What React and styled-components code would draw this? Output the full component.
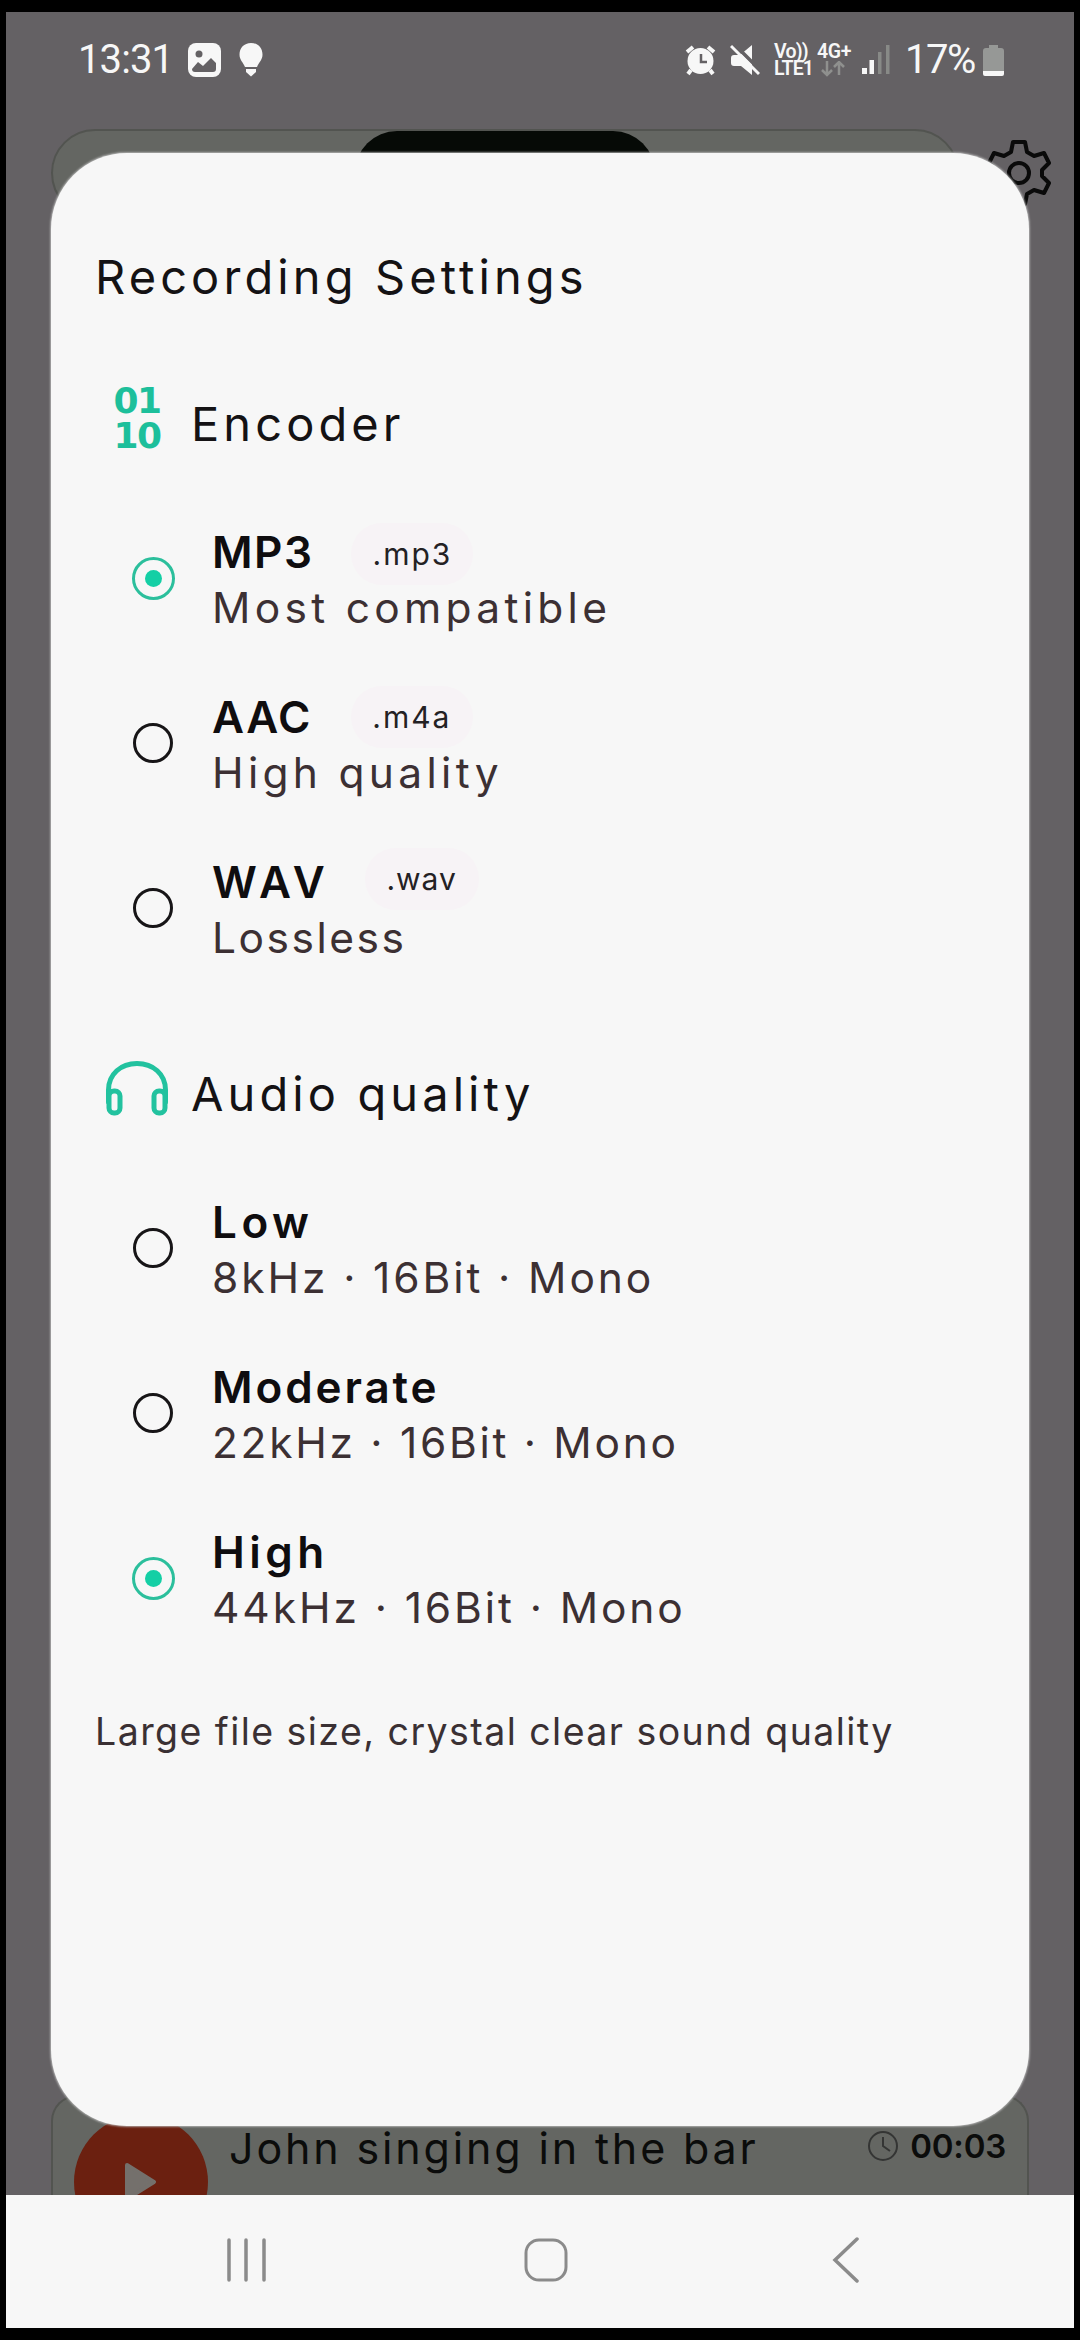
import React from "react";
import styled, { createGlobalStyle } from "styled-components";

const GlobalStyle = createGlobalStyle`
  * {
    box-sizing: border-box;
  }

  body {
    margin: 0;
    background-color: #000;
    font-family: Inter, "Liberation Sans", sans-serif;
  }

  svg {
    display: block;
    flex-shrink: 0;
  }
`;

const Device = styled.div`
  width: 1080px;
  height: 2340px;
  padding: 12px 6px;
  background-color: #000;
`;

const Screen = styled.div`
  position: relative;
  display: flex;
  flex-direction: column;
  width: 1068px;
  height: 2316px;
  overflow: hidden;
  background-color: #646164;
`;

const StatusBar = styled.div`
  display: flex;
  justify-content: space-between;
  height: 117px;
  padding: 24px 70px 0 72px;
  color: #f7f7f7;
  font-family: Roboto, sans-serif;
  font-size: 40px;
  line-height: 48px;

  > .side {
    display: flex;
    align-items: center;
    height: 48px;
  }

  .bulb {
    margin-left: 18px;
  }

  .mute {
    margin-left: 14px;
  }

  .signal {
    margin-left: 11px;
  }
`;

const Clock = styled.span`
  width: 110px;
  letter-spacing: -0.9px;
`;

const Percent = styled.span`
  width: 78px;
  margin-left: 15px;
  letter-spacing: -1.5px;
`;

const Network = styled.div`
  display: flex;
  flex-direction: column;
  width: ${(props) => props.$width}px;
  margin-left: ${(props) => props.$left}px;
  font-size: 19.5px;
  font-weight: 600;
  line-height: 17px;
  letter-spacing: ${(props) => props.$spacing || 0}px;
  white-space: nowrap;

  > svg {
    margin: 1px 0 0 4px;
  }
`;

const TopBar = styled.div`
  display: flex;
  align-items: center;
  height: 88px;
  padding-left: 45px;

  > svg {
    margin-left: 27px;
  }
`;

const Tabs = styled.div`
  display: flex;
  justify-content: center;
  width: 908px;
  height: 88px;
  border: 2px solid #525450;
  border-radius: 44px;
  background-color: #646662;
`;

const ActiveTab = styled.div`
  width: 300px;
  height: 84px;
  border-radius: 44px;
  background-color: #060a06;
`;

const Recording = styled.div`
  display: flex;
  height: 100px;
  margin: auto 45px 0;
  padding: 18px 21px 0 21px;
  border: 2px solid #525450;
  border-bottom: 0;
  border-radius: 26px 26px 0 0;
  background-color: #646662;
  overflow: hidden;
  color: #0b0c0b;

  > .name {
    flex: 1;
    margin: 6px 0 0 21px;
    font-size: 43px;
    line-height: 54px;
    letter-spacing: 2.85px;
    white-space: nowrap;
  }

  > .length {
    display: flex;
    align-items: center;
    gap: 11px;
    height: 44px;
    margin-top: 9px;
    font-size: 33px;
    font-weight: 600;
    letter-spacing: -0.2px;
  }
`;

const Play = styled.div`
  display: flex;
  align-items: center;
  justify-content: center;
  width: 134px;
  height: 134px;
  flex-shrink: 0;
  border-radius: 100%;
  background-color: #6b2010;
`;

const NavBar = styled.div`
  display: flex;
  align-items: center;
  height: 133px;
  padding: 0 0 3px 218px;
  flex-shrink: 0;
  background-color: #f7f7f7;

  > svg + svg {
    margin-left: 255px;
  }
`;

const Dialog = styled.div`
  position: absolute;
  top: 141px;
  left: 45px;
  width: 978px;
  height: 1973px;
  padding: 96px 42px 0 44px;
  border-radius: 76px;
  background-color: #f7f7f7;
  box-shadow: 0 0 2px 1px rgba(190, 190, 190, 0.8);
`;

const Title = styled.h1`
  margin: 0;
  color: #141214;
  font-size: 47px;
  font-weight: 400;
  line-height: 56px;
  letter-spacing: 4.1px;
`;

const SectionHead = styled.div`
  display: flex;
  align-items: center;
  height: 64px;
  margin-top: ${(props) => props.$top}px;

  > .icon {
    display: flex;
    justify-content: center;
    width: 84px;
    margin-right: 12px;
  }

  > h1 {
    padding-top: 11px;
  }
`;

const Bits = styled.div`
  display: flex;
  flex-direction: column;
  color: #1dbf9b;
  font-family: "DejaVu Sans", sans-serif;
  font-size: 36px;
  font-weight: 700;
  line-height: 35px;
  letter-spacing: -1.5px;
`;

const Options = styled.div`
  display: flex;
  flex-direction: column;
  gap: 55px;
  margin-top: 75px;
`;

const Option = styled.div`
  display: flex;
  height: 110px;
  padding-left: 35px;
`;

const Radio = styled.div`
  display: flex;
  align-items: center;
  justify-content: center;
  width: 46px;
  height: 46px;
  margin: 30px 36px 0 0;

  > .ring {
    display: flex;
    align-items: center;
    justify-content: center;
    width: ${(props) => (props.$on ? 43 : 40)}px;
    height: ${(props) => (props.$on ? 43 : 40)}px;
    border: 3.5px solid ${(props) => (props.$on ? "#2bbf9c" : "#171517")};
    border-radius: 100%;
  }

  > .ring > .dot {
    width: 17px;
    height: 17px;
    border-radius: 100%;
    background-color: #14cfa5;
  }
`;

const Name = styled.div`
  display: flex;
  align-items: flex-start;
  height: 55px;
  color: #0f0d0f;
  font-size: 44px;
  font-weight: 600;
  line-height: 55px;
  letter-spacing: ${(props) => props.$spacing}px;
`;

const Tag = styled.span`
  width: ${(props) => props.$width}px;
  height: 62px;
  margin: ${(props) => props.$top}px 0 0 ${(props) => props.$left}px;
  border-radius: 31px;
  background-color: #f7f3f6;
  color: #242124;
  font-size: 30px;
  font-weight: 400;
  line-height: 62px;
  letter-spacing: ${(props) => props.$spacing}px;
  text-align: center;
`;

const Detail = styled.div`
  color: #3c3033;
  font-size: 42.5px;
  line-height: 55px;
  letter-spacing: ${(props) => props.$spacing}px;
  white-space: nowrap;
`;

const Note = styled.p`
  margin: 75px 0 0;
  color: #3a3033;
  font-size: 37.5px;
  line-height: 44px;
  letter-spacing: 1.45px;
  white-space: nowrap;
`;

const encoders = [
  {
    name: "MP3",
    nameSpacing: 1.5,
    detail: "Most compatible",
    spacing: 4.3,
    tag: { text: ".mp3", top: -2, left: 38, width: 122, spacing: 2 },
    on: true,
  },
  {
    name: "AAC",
    nameSpacing: 1.5,
    detail: "High quality",
    spacing: 4.3,
    tag: { text: ".m4a", top: -4, left: 39, width: 122, spacing: 2 },
  },
  {
    name: "WAV",
    nameSpacing: 5,
    detail: "Lossless",
    spacing: 2.5,
    tag: { text: ".wav", top: -7, left: 35, width: 114, spacing: 1 },
  },
];

const qualities = [
  {
    name: "Low",
    nameSpacing: 4.5,
    detail: "8kHz · 16Bit · Mono",
    spacing: 2.9,
  },
  {
    name: "Moderate",
    nameSpacing: 2.9,
    detail: "22kHz · 16Bit · Mono",
    spacing: 2.7,
  },
  {
    name: "High",
    nameSpacing: 4.5,
    detail: "44kHz · 16Bit · Mono",
    spacing: 2.9,
    on: true,
  },
];

function OptionRow({ option }) {
  const { tag } = option;
  return (
    <Option>
      <Radio $on={option.on}>
        <div className="ring">{option.on && <div className="dot"></div>}</div>
      </Radio>
      <div>
        <Name $spacing={option.nameSpacing}>
          {option.name}
          {tag && (
            <Tag
              $top={tag.top}
              $left={tag.left}
              $width={tag.width}
              $spacing={tag.spacing}
            >
              {tag.text}
            </Tag>
          )}
        </Name>
        <Detail $spacing={option.spacing}>{option.detail}</Detail>
      </div>
    </Option>
  );
}

function StatusIcons() {
  return (
    <>
      <svg width="31" height="32" viewBox="0 0 31 32">
        <g fill="none" stroke="#f7f7f7" strokeWidth="4">
          <path d="M2 8 L8 3" />
          <path d="M29 8 L23 3" />
          <path d="M6 26 L3 30" />
          <path d="M25 26 L28 30" />
        </g>
        <circle cx="15.500" cy="17" r="13" fill="#f7f7f7" />
        <path
          d="M16 10 V18 H22"
          fill="none"
          stroke="#646164"
          strokeWidth="2.500"
        />
      </svg>
      <svg className="mute" width="30" height="32" viewBox="0 0 30 32">
        <path
          d="M22 1 V31 L11 22 H4 Q1 22 1 19 V14 Q1 11 4 11 H10 Z"
          fill="#f7f7f7"
        />
        <path d="M5 1 L33 29" stroke="#646164" strokeWidth="3.500" />
        <path d="M1 2 L29 30" stroke="#f7f7f7" strokeWidth="3" />
      </svg>
    </>
  );
}

export default function App() {
  return (
    <>
      <GlobalStyle />
      <Device>
        <Screen>
          <StatusBar>
            <div className="side">
              <Clock>13:31</Clock>
              <svg width="33" height="34" viewBox="0 0 33 34">
                <rect width="33" height="34" rx="8" fill="#f7f7f7" />
                <circle cx="11" cy="11" r="3.500" fill="#646164" />
                <path
                  d="M4 26 L10 19 L15 23 L23 15 L28 20 V26 Q28 29 25 29 H7 Q4 29 4 26 Z"
                  fill="#646164"
                />
              </svg>
              <svg className="bulb" width="24" height="34" viewBox="0 0 24 34">
                <path
                  d="M12 0 C5 0 0.500 5 0.500 11.500 C0.500 17 4 19 6 24 H18 C20 19 23.500 17 23.500 11.500 C23.500 5 19 0 12 0 Z"
                  fill="#f7f7f7"
                />
                <path d="M7 26 H17 V29 L12 33.500 L7 29 Z" fill="#f7f7f7" />
              </svg>
            </div>
            <div className="side">
              <StatusIcons />
              <Network $width={37} $left={14} $spacing={-0.8}>
                <span>Vo))</span>
                <span>LTE1</span>
              </Network>
              <Network $width={34} $left={6} $spacing={-0.4}>
                <span>4G+</span>
                <svg width="24" height="16" viewBox="0 0 24 16">
                  <path
                    d="M6 0 V14 M1 9 L6 14 L11 9 M18 14 V1 M13 6 L18 1 L23 6"
                    fill="none"
                    stroke="#8f908e"
                    strokeWidth="2.500"
                  />
                </svg>
              </Network>
              <svg className="signal" width="28" height="30" viewBox="0 0 28 30">
                <rect x="0" y="23" width="5" height="6" fill="#f7f7f7" />
                <rect x="7.500" y="15" width="4.500" height="14" fill="#f7f7f7" />
                <rect x="16" y="7" width="3.500" height="22" fill="#888a87" />
                <rect x="24" y="0" width="3.500" height="29" fill="#888a87" />
              </svg>
              <Percent>17%</Percent>
              <svg width="21" height="33" viewBox="0 0 21 33">
                <path
                  d="M6 1 H15 V4 H18 Q21 4 21 7 V27 H0 V7 Q0 4 3 4 H6 Z"
                  fill="#969896"
                />
                <path
                  d="M0 27 H21 V30 Q21 32 19 32 H2 Q0 32 0 30 Z"
                  fill="#f7f7f7"
                />
              </svg>
            </div>
          </StatusBar>

          <TopBar>
            <Tabs>
              <ActiveTab />
            </Tabs>
            <svg width="66" height="66" viewBox="0 0 66 66">
              <path
                d="M27 2 H39 L41 12 L48 16 L58 13 L63 23 L56 30 V36 L63 43 L58 53 L48 50 L41 54 L39 64 H27 L25 54 L18 50 L8 53 L3 43 L10 36 V30 L3 23 L8 13 L18 16 L25 12 Z"
                fill="none"
                stroke="#0a0a0a"
                strokeWidth="4"
                strokeLinejoin="round"
              />
              <circle
                cx="33"
                cy="33"
                r="10"
                fill="none"
                stroke="#0a0a0a"
                strokeWidth="4"
              />
            </svg>
          </TopBar>

          <Recording>
            <Play>
              <svg width="32" height="40" viewBox="0 0 32 40">
                <path
                  d="M2 3 L29 20 L2 37 Z"
                  fill="#74706c"
                  stroke="#74706c"
                  strokeWidth="4"
                  strokeLinejoin="round"
                />
              </svg>
            </Play>
            <div className="name">John singing in the bar</div>
            <div className="length">
              <svg width="32" height="32" viewBox="0 0 32 32">
                <circle
                  cx="16"
                  cy="16"
                  r="14"
                  fill="none"
                  stroke="#343534"
                  strokeWidth="2"
                />
                <path
                  d="M16 7 V16 L23 21"
                  fill="none"
                  stroke="#343534"
                  strokeWidth="2"
                />
              </svg>
              00:03
            </div>
          </Recording>

          <NavBar>
            <svg width="45" height="44" viewBox="0 0 45 44">
              <path
                d="M5 2 V42 M22 2 V42 M40 2 V42"
                stroke="#8b8b8b"
                strokeWidth="3.500"
                strokeLinecap="round"
              />
            </svg>
            <svg width="44" height="44" viewBox="0 0 44 44">
              <rect
                x="2"
                y="2"
                width="40"
                height="40"
                rx="13"
                fill="none"
                stroke="#8b8b8b"
                strokeWidth="3"
              />
            </svg>
            <svg width="44" height="46" viewBox="0 0 44 46">
              <path
                d="M34 2 L12 23 L34 44"
                fill="none"
                stroke="#8b8b8b"
                strokeWidth="3.500"
                strokeLinecap="round"
              />
            </svg>
          </NavBar>

          <Dialog>
            <Title>Recording Settings</Title>

            <SectionHead $top={81}>
              <div className="icon">
                <Bits>
                  <span>01</span>
                  <span>10</span>
                </Bits>
              </div>
              <Title>Encoder</Title>
            </SectionHead>
            <Options>
              {encoders.map((option) => (
                <OptionRow key={option.name} option={option} />
              ))}
            </Options>

            <SectionHead $top={91}>
              <div className="icon">
                <svg width="64" height="56" viewBox="0 0 64 56">
                  <g
                    fill="none"
                    stroke="#22c29f"
                    strokeWidth="5"
                    strokeLinecap="round"
                    strokeLinejoin="round"
                  >
                    <path d="M3.500 42 V30 C3.500 14 16 3.500 32 3.500 C48 3.500 60.500 14 60.500 30 V42" />
                    <rect x="4" y="31" width="11" height="22" rx="5" />
                    <rect x="49" y="31" width="11" height="22" rx="5" />
                  </g>
                </svg>
              </div>
              <Title>Audio quality</Title>
            </SectionHead>
            <Options>
              {qualities.map((option) => (
                <OptionRow key={option.name} option={option} />
              ))}
            </Options>

            <Note>Large file size, crystal clear sound quality</Note>
          </Dialog>
        </Screen>
      </Device>
    </>
  );
}
